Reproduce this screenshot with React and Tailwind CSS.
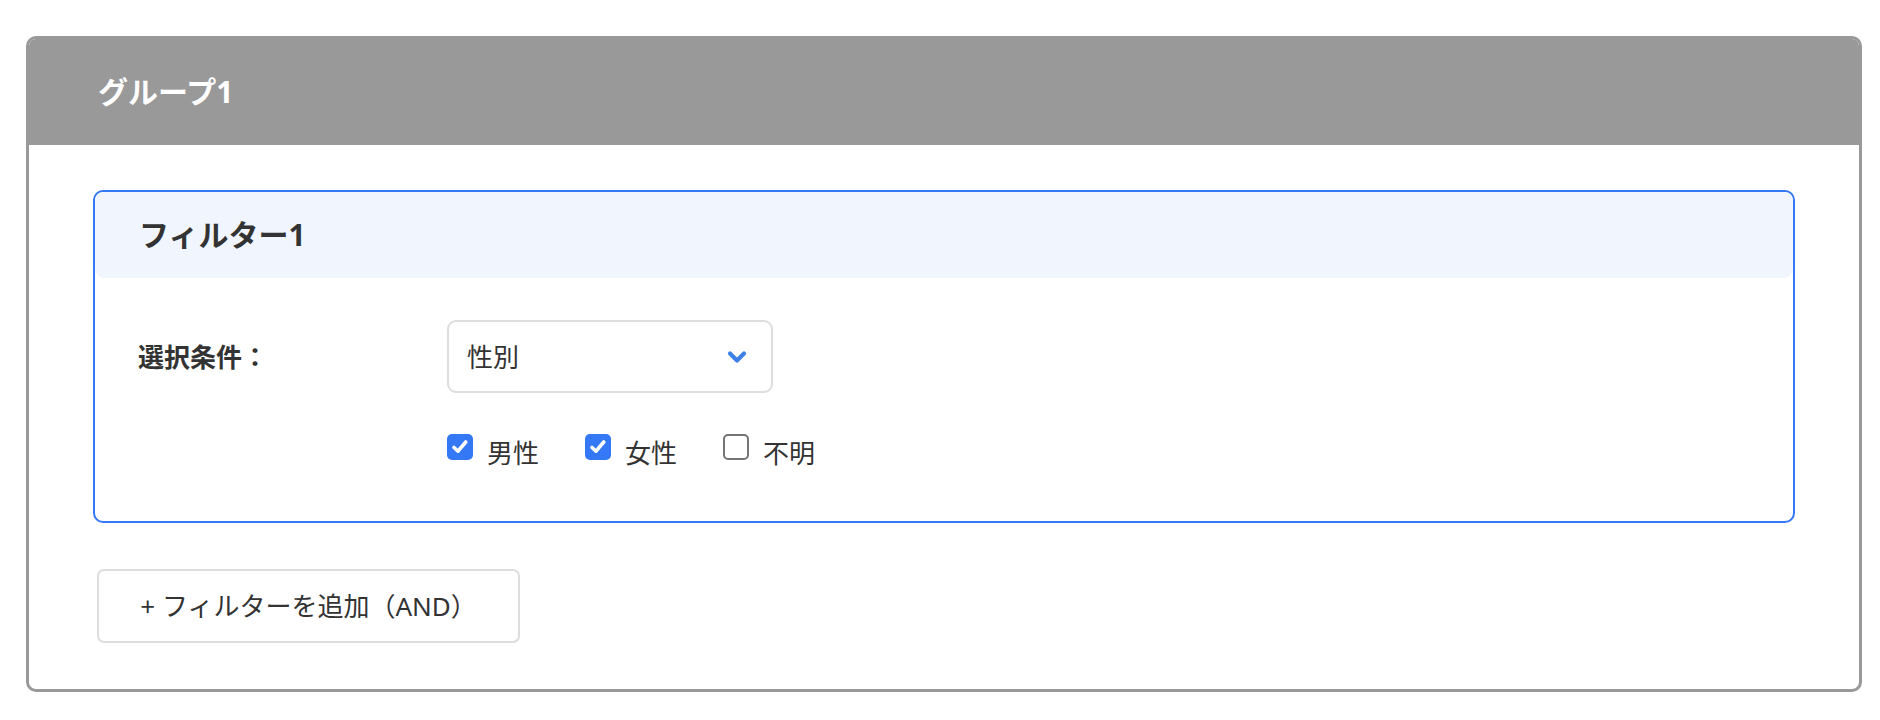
import React, { useState } from 'react';

const FONT = { fontFamily: '"Noto Sans", "Noto Sans CJK JP", sans-serif' };

const Checkbox = ({ checked, label, onToggle }) => (
  <label className="flex items-start cursor-pointer select-none" onClick={onToggle}>
    {checked ? (
      <span className="w-[26px] h-[26px] rounded-[5px] bg-[#3478f6] flex items-center justify-center">
        <svg width="20" height="20" viewBox="0 0 20 20" fill="none">
          <path d="M4 10.5 L8 14.2 L15.8 5" stroke="#fff" strokeWidth="3.6" strokeLinecap="round" strokeLinejoin="round" />
        </svg>
      </span>
    ) : (
      <span className="w-[26px] h-[26px] rounded-[5px] border-2 border-[#767676] bg-white" />
    )}
    <span className="ml-[14px] mt-[6px] text-[26px] leading-none text-[#333]">{label}</span>
  </label>
);

export default function App() {
  const [genders, setGenders] = useState({ male: true, female: true, unknown: false });
  const toggle = (k) => setGenders((g) => ({ ...g, [k]: !g[k] }));

  return (
    <div className="w-[1880px] h-[720px] bg-white pt-[36px] pl-[26px] pr-[18px]" style={FONT}>
      {/* グループ */}
      <div className="border-[3px] border-[#999] rounded-[10px] overflow-hidden bg-white">
        <div className="h-[106px] bg-[#999] flex items-center pl-[69px]">
          <h2 className="text-[30px] font-bold text-white leading-none">グループ1</h2>
        </div>

        <div className="px-[64px] pt-[45px] pb-[46px]">
          {/* フィルター */}
          <div className="border-2 border-[#3478f6] rounded-[10px] bg-white">
            <div className="h-[86px] bg-[#f1f6fe] rounded-[9px] flex items-center pl-[44px]">
              <h3 className="text-[30px] font-bold text-[#333] leading-none">フィルター1</h3>
            </div>
            <div className="pl-[43px] pt-[42px] pb-[55px]">
              <div className="flex items-center">
                <div className="w-[309px] text-[26px] font-bold text-[#333] leading-none">選択条件：</div>
                <div className="w-[326px] h-[73px] border-2 border-[#ddd] rounded-[9px] flex items-center justify-between pl-[18px] pr-[24px]">
                  <span className="text-[26px] text-[#333] leading-none">性別</span>
                  <svg width="20" height="14" viewBox="0 0 20 14" fill="none">
                    <path d="M3 3.5 L10 10.5 L17 3.5" stroke="#3f7fe8" strokeWidth="4.2" strokeLinecap="round" strokeLinejoin="round" />
                  </svg>
                </div>
              </div>
              <div className="flex items-start gap-[46px] ml-[309px] mt-[41px]">
                <Checkbox checked={genders.male} label="男性" onToggle={() => toggle('male')} />
                <Checkbox checked={genders.female} label="女性" onToggle={() => toggle('female')} />
                <Checkbox checked={genders.unknown} label="不明" onToggle={() => toggle('unknown')} />
              </div>
            </div>
          </div>

          <button
            type="button"
            className="mt-[46px] ml-[4px] w-[423px] h-[74px] border-2 border-[#ddd] rounded-[7px] bg-white text-[26px] text-[#333] leading-none flex items-center justify-center"
          >
            + フィルターを追加（AND）
          </button>
        </div>
      </div>
    </div>
  );
}
